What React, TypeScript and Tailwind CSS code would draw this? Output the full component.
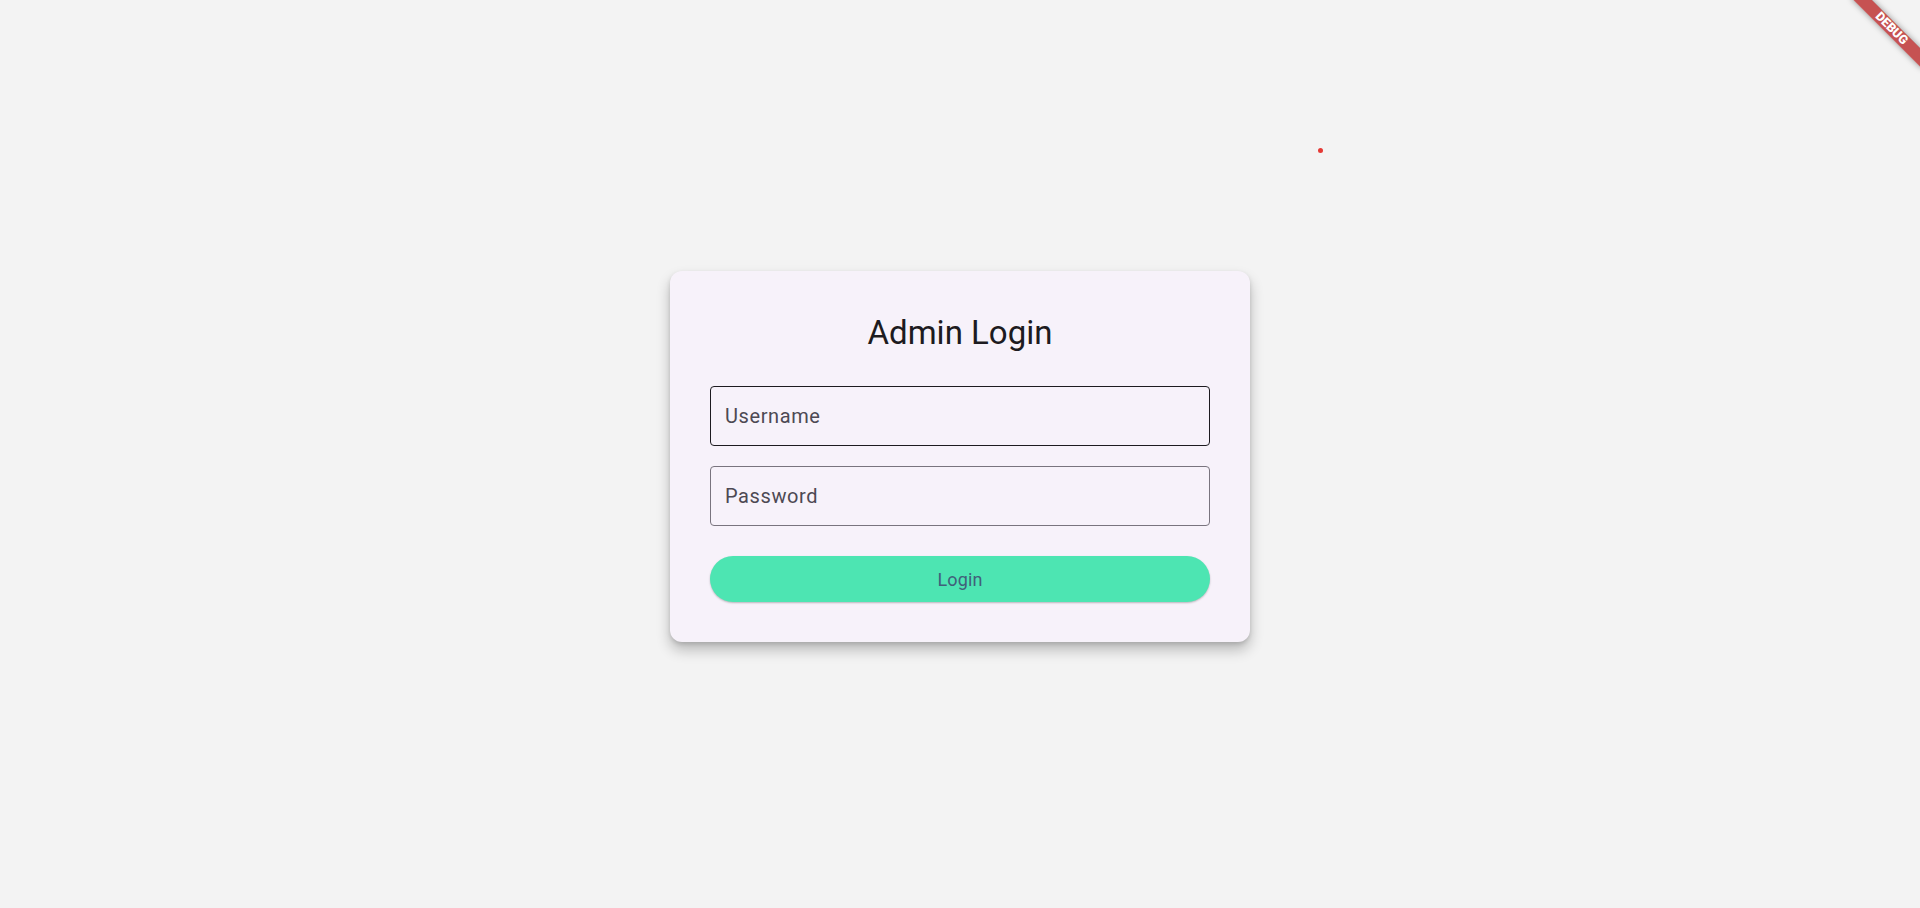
import { useState } from "react";

export default function App() {
  const [form, setForm] = useState({ username: "", password: "" });

  const handleChange = (e: React.ChangeEvent<HTMLInputElement>) => {
    setForm({ ...form, [e.target.name]: e.target.value });
  };

  return (
    <div
      className="relative h-screen w-full overflow-hidden bg-[#f3f3f3] flex items-center justify-center pt-[5px]"
      style={{ fontFamily: "Roboto, 'Noto Sans', sans-serif" }}
    >
      {/* Login card */}
      <div className="w-[580px] rounded-[12px] bg-[#f7f2fa] px-10 py-10 shadow-[0_8px_14px_rgba(0,0,0,0.24),0_2px_4px_rgba(0,0,0,0.12)]">
        <h1 className="mt-[2px] h-[40px] text-center text-[33px] leading-[40px] font-normal text-[#1d1b20]">
          Admin Login
        </h1>

        <input
          name="username"
          placeholder="Username"
          value={form.username}
          onChange={handleChange}
          className="mt-[33px] block h-[60px] w-full rounded-[4px] border border-[#1d1b20] bg-transparent pl-[14px] text-[20px] tracking-[0.6px] text-[#1d1b20] outline-none placeholder:text-[#4d4953]"
        />
        <input
          name="password"
          type="password"
          placeholder="Password"
          value={form.password}
          onChange={handleChange}
          className="mt-[20px] block h-[60px] w-full rounded-[4px] border border-[#79747e] bg-transparent pl-[14px] text-[20px] tracking-[0.6px] text-[#1d1b20] outline-none placeholder:text-[#4d4953]"
        />

        <button
          type="button"
          className="mt-[30px] block h-[46px] w-full rounded-full bg-[#4de5b2] text-[18px] tracking-[0.1px] text-[#41607a] shadow-[0_1px_2px_rgba(0,0,0,0.25)]"
        >
          Login
        </button>
      </div>

      {/* stray red dot */}
      <div className="absolute left-[1318px] top-[148px] h-[5px] w-[5px] rounded-full bg-[#e53935]" />

      {/* debug banner */}
      <div className="absolute right-0 top-0 h-0 w-0 origin-top-left rotate-45">
        <div className="absolute left-[-50px] top-[34px] flex h-[13px] w-[100px] items-center justify-center bg-[rgba(183,28,28,0.75)] shadow-[0_0_6px_rgba(0,0,0,0.4)]">
          <span className="text-[12.5px] leading-none font-black text-white">DEBUG</span>
        </div>
      </div>
    </div>
  );
}
